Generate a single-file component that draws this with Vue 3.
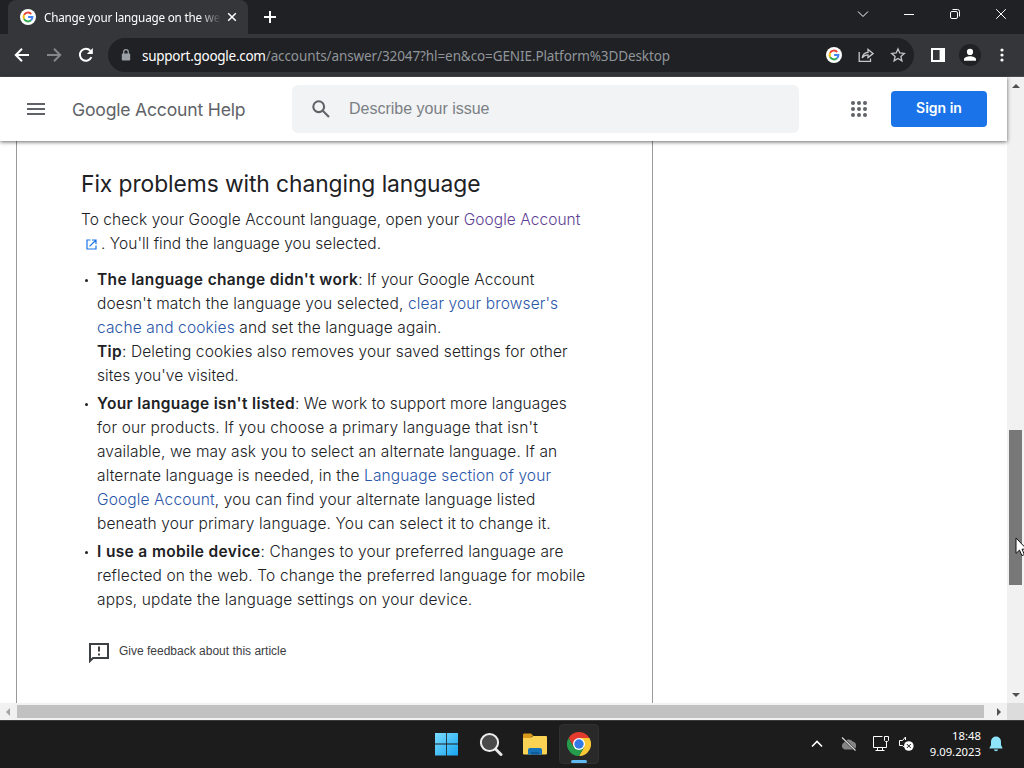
<template>
  <div class="screen">
    <!-- Tab strip -->
    <div class="tab-strip">
      <div class="tab">
        <svg class="favicon" viewBox="0 0 16 16">
          <circle cx="8" cy="8" r="8" fill="#fff" />
          <g fill="none" stroke-width="2">
            <path d="M4.1 5.9A4.4 4.4 0 0 1 11.2 5" stroke="#ea4335" />
            <path d="M4.1 5.9A4.4 4.4 0 0 0 4.1 10.1" stroke="#fbbc05" />
            <path d="M4.1 10.1A4.4 4.4 0 0 0 11 11.2" stroke="#34a853" />
            <path d="M8.1 8H12.4A4.4 4.4 0 0 1 11 11.2" stroke="#4285f4" />
          </g>
        </svg>
        <span class="tab-title">Change your language on the we</span>
        <svg class="tab-close" viewBox="0 0 10 10"><path d="M1.2 1.2L8.8 8.8M8.8 1.2L1.2 8.8" /></svg>
      </div>
      <svg class="new-tab" viewBox="0 0 12 12"><path d="M6 0V12M0 6H12" /></svg>
      <div class="window-buttons">
        <svg viewBox="0 0 12 12"><path d="M1 3.5L6 8.5L11 3.5" /></svg>
        <svg viewBox="0 0 12 12"><path d="M1 6.5H11" /></svg>
        <svg viewBox="0 0 12 12">
          <rect x="1.5" y="3.5" width="7" height="7" rx="1.4" />
          <path d="M3.5 1.5H8.5A2 2 0 0 1 10.5 3.5V8.5" />
        </svg>
        <svg viewBox="0 0 12 12"><path d="M1.2 1.2L10.8 10.8M10.8 1.2L1.2 10.8" /></svg>
      </div>
    </div>

    <!-- Toolbar -->
    <div class="toolbar">
      <svg class="nav-icon" viewBox="0 0 16 16"><path d="M15 8H2M8 1.8L1.8 8L8 14.2" /></svg>
      <svg class="nav-icon dim" viewBox="0 0 16 16"><path d="M1 8H14M8 1.8L14.2 8L8 14.2" /></svg>
      <svg class="nav-icon" viewBox="0 0 16 16">
        <path d="M13.4 10.2A6 6 0 1 1 12.4 3.8" />
        <path d="M14.8 1V6.9H8.9Z" fill="#fff" stroke="none" />
      </svg>
      <div class="omnibox">
        <svg class="lock" viewBox="0 0 10 12">
          <rect x="0.8" y="4.4" width="8.4" height="7.2" rx="1" fill="#9aa0a6" />
          <path d="M2.7 5V3A2.3 2.3 0 0 1 7.3 3V5" fill="none" stroke="#9aa0a6" stroke-width="1.3" />
        </svg>
        <div class="url"><span class="host">support.google.com</span><span class="path">/accounts/answer/32047?hl=en&amp;co=GENIE.Platform%3DDesktop</span></div>
        <svg class="favicon" viewBox="0 0 16 16">
          <circle cx="8" cy="8" r="8" fill="#fff" />
          <g fill="none" stroke-width="2">
            <path d="M4.1 5.9A4.4 4.4 0 0 1 11.2 5" stroke="#ea4335" />
            <path d="M4.1 5.9A4.4 4.4 0 0 0 4.1 10.1" stroke="#fbbc05" />
            <path d="M4.1 10.1A4.4 4.4 0 0 0 11 11.2" stroke="#34a853" />
            <path d="M8.1 8H12.4A4.4 4.4 0 0 1 11 11.2" stroke="#4285f4" />
          </g>
        </svg>
        <svg class="box-icon" viewBox="0 0 16 16">
          <path d="M1.2 5V14.3H12.5V11.5" />
          <path d="M4.2 11C4.6 7.6 6.6 5.6 10 5.3V2.4L15 6.6L10 10.6V7.9C7.4 7.9 5.6 8.9 4.2 11Z" />
        </svg>
        <svg class="box-icon" viewBox="0 0 16 16">
          <path d="M8 1.9L9.8 6L14.3 6.4L10.9 9.4L11.9 13.8L8 11.5L4.1 13.8L5.1 9.4L1.7 6.4L6.2 6Z" />
        </svg>
      </div>
      <svg class="side-panel" viewBox="0 0 14 14">
        <path d="M0 0H14V14H0ZM2 2V12H8.6V2Z" fill="#fff" fill-rule="evenodd" />
      </svg>
      <svg class="profile" viewBox="0 0 22 22">
        <circle cx="11" cy="11" r="11" fill="#202124" />
        <circle cx="11" cy="7.9" r="3.1" fill="#fff" />
        <path d="M5 16.8V15.3C5 13.2 8.5 12.2 11 12.2S17 13.2 17 15.3V16.8Z" fill="#fff" />
      </svg>
      <svg class="menu-dots" viewBox="0 0 4 14">
        <circle cx="2" cy="2" r="1.6" /><circle cx="2" cy="7" r="1.6" /><circle cx="2" cy="12" r="1.6" />
      </svg>
    </div>

    <!-- Page -->
    <div class="viewport">
      <div class="page">
        <header class="help-header">
          <svg class="burger" viewBox="0 0 18 12"><path d="M0 1H18M0 6H18M0 11H18" /></svg>
          <span class="product">Google Account Help</span>
          <div class="search">
            <svg viewBox="0 0 18 18">
              <circle cx="6.7" cy="6.7" r="5.4" />
              <path d="M10.8 10.8L17 17" />
            </svg>
            <span>Describe your issue</span>
          </div>
          <svg class="apps" viewBox="0 0 16 16">
            <template v-for="y in [2, 8, 14]" :key="y">
              <circle v-for="x in [2, 8, 14]" :key="x" :cx="x" :cy="y" r="2" />
            </template>
          </svg>
          <button class="sign-in">Sign in</button>
        </header>

        <main class="article">
          <h2>Fix problems with changing language</h2>
          <div class="intro">
            <div class="line">
              <span :style="{ letterSpacing: intro[0].spacing + 'px' }">To check your Google Account language, open your <a class="visited">Google Account</a></span>
            </div>
            <div class="line">
              <svg class="external" viewBox="0 0 11 11">
                <path d="M4.5 1H1V10H10V6.5M6 1H10V5M10 1L3.6 7.4" />
              </svg>
              <span :style="{ letterSpacing: intro[1].spacing + 'px' }">. You'll find the language you selected.</span>
            </div>
          </div>
          <ul>
            <li v-for="(item, i) in items" :key="i">
              <div v-for="(line, j) in item" :key="j" class="line" :style="{ letterSpacing: line.spacing + 'px' }">
                <component :is="part.tag" v-for="(part, k) in line.parts" :key="k">{{ part.text }}</component>
              </div>
            </li>
          </ul>
          <div class="feedback">
            <svg viewBox="0 0 20 20">
              <path d="M1 18V1H19V15H4Z" />
              <path d="M10 3.5V8.6M10 10.6V12.6" />
            </svg>
            <span>Give feedback about this article</span>
          </div>
        </main>
      </div>

      <div class="v-scroll">
        <svg viewBox="0 0 8 4"><path d="M0 4L4 0L8 4Z" /></svg>
        <div class="v-thumb"></div>
        <svg viewBox="0 0 8 4"><path d="M0 0L4 4L8 0Z" /></svg>
      </div>
    </div>

    <div class="h-scroll">
      <svg class="off" viewBox="0 0 4 8"><path d="M4 0L0 4L4 8Z" /></svg>
      <div class="h-thumb"></div>
      <svg viewBox="0 0 4 8"><path d="M0 0L4 4L0 8Z" /></svg>
      <div class="corner"></div>
    </div>

    <!-- Taskbar -->
    <div class="taskbar">
      <div class="apps-row">
        <div class="task">
          <svg width="24" height="24" viewBox="0 0 24 24">
            <defs>
              <linearGradient id="win" x1="0" y1="0" x2="1" y2="1" gradientUnits="objectBoundingBox">
                <stop offset="0" stop-color="#7bdcff" /><stop offset="1" stop-color="#18a4f0" />
              </linearGradient>
            </defs>
            <path d="M0 1H11.1V11.4H0ZM11.9 1H23V11.4H11.9ZM0 12.4H11.1V23.5H0ZM11.9 12.4H23V23.5H11.9Z" fill="url(#win)" />
          </svg>
        </div>
        <div class="task">
          <svg width="24" height="24" viewBox="0 0 24 24">
            <path d="M16.5 17L22 22.5" stroke="#e6e6e6" stroke-width="3" stroke-linecap="round" />
            <circle cx="10.5" cy="10.5" r="8.6" fill="#4a4a4a" stroke="#eee" stroke-width="2" />
          </svg>
        </div>
        <div class="task">
          <svg width="26" height="24" viewBox="0 0 26 24">
            <path d="M1 3C1 2 1.5 1.5 2.5 1.5H9L11.5 4H10L8 7H1Z" fill="#d99a1c" />
            <path d="M1 6H8.5L11 4H24Q25 4 25 5V21Q25 22.5 24 22.5H2Q1 22.5 1 21.5Z" fill="#fbd354" />
            <path d="M6 22.5V18Q6 16 8 16H18Q20 16 20 18V22.5Z" fill="#1673b8" />
            <path d="M9 22.5V20H17V22.5Z" fill="#0f5c9c" />
          </svg>
        </div>
        <div class="task active">
          <svg width="24" height="24" viewBox="0 0 24 24">
            <path d="M17.2 15L12 24A12 12 0 0 0 22.4 6H12Z" fill="#fcc934" />
            <path d="M12 6H22.4A12 12 0 0 0 1.6 6L6.8 15Z" fill="#e33b2e" />
            <path d="M1.6 6A12 12 0 0 0 12 24L17.2 15H6.8Z" fill="#259b4b" />
            <circle cx="12" cy="12" r="6" fill="#fff" />
            <circle cx="12" cy="12" r="4.7" fill="#3478e5" />
          </svg>
          <i></i>
        </div>
      </div>
      <div class="tray">
        <svg class="chevron" width="12" height="8" viewBox="0 0 12 8"><path d="M1 6.5L6 1.5L11 6.5" /></svg>
        <svg class="cloud" width="18" height="14" viewBox="0 0 18 14">
          <path d="M4.5 12.5A3.7 3.7 0 0 1 4 5.6A5 5 0 0 1 12.7 4.5A4.2 4.2 0 0 1 13.5 12.5Z" fill="#858585" />
          <path d="M2 0.5L15.5 13.5" stroke="#1c1c1c" stroke-width="2.2" />
          <path d="M2 0.5L15.5 13.5" stroke="#ddd" stroke-width="1.1" />
        </svg>
        <svg class="net" width="18" height="17" viewBox="0 0 18 17">
          <path d="M10.5 1.5H1.5V12.5H14.5V8M5.5 12.5V15.5M10.5 12.5V15.5M3.5 15.5H12.5M12.5 1.5H16.5V5.5L15.5 6.5H13.5L12.5 5.5ZM14.5 6.5V9" />
        </svg>
        <svg class="sound" width="16" height="15" viewBox="0 0 16 15">
          <path d="M6.5 4V1L3.5 4.5H.5V9.5H3.5L4.8 11" fill="none" stroke="#fff" />
          <circle cx="9.8" cy="10" r="4.8" fill="#fff" />
          <path d="M7.8 8L11.8 12M11.8 8L7.8 12" stroke="#1c1c1c" />
        </svg>
        <div class="clock">
          <span>18:48</span>
          <span class="date">9.09.2023</span>
        </div>
        <svg class="bell" width="14" height="16" viewBox="0 0 14 16">
          <path d="M7 .5A5 5 0 0 0 2 5.5V9L.5 12V12.6H13.5V12L12 9V5.5A5 5 0 0 0 7 .5ZM4.8 13.6A2.3 2.3 0 0 0 9.2 13.6Z" fill="#8fe3fa" />
        </svg>
      </div>
    </div>

    <svg class="cursor" viewBox="0 0 13 20">
      <path d="M1 1V16.4L4.5 13.1L6.9 18.6L9.4 17.5L7 12.2H11.8Z" fill="#fff" stroke="#111" />
    </svg>
  </div>
</template>

<script setup>
const t = (text) => ({ tag: 'span', text })
const b = (text) => ({ tag: 'b', text })
const a = (text) => ({ tag: 'a', text })
const line = (spacing, ...parts) => ({ spacing, parts })

const intro = [{ spacing: 0.057 }, { spacing: 0.04 }]

const items = [
  [
    line(0.05, b("The language change didn't work"), t(': If your Google Account')),
    line(0.13, t("doesn't match the language you selected, "), a("clear your browser's")),
    line(0.13, a('cache and cookies'), t(' and set the language again.')),
    line(0.12, b('Tip'), t(': Deleting cookies also removes your saved settings for other')),
    line(0.02, t("sites you've visited."))
  ],
  [
    line(0.06, b("Your language isn't listed"), t(': We work to support more languages')),
    line(0.16, t("for our products. If you choose a primary language that isn't")),
    line(0.11, t('available, we may ask you to select an alternate language. If an')),
    line(0.145, t('alternate language is needed, in the '), a('Language section of your')),
    line(0.13, a('Google Account'), t(', you can find your alternate language listed')),
    line(0.13, t('beneath your primary language. You can select it to change it.'))
  ],
  [
    line(0.15, b('I use a mobile device'), t(': Changes to your preferred language are')),
    line(0.14, t('reflected on the web. To change the preferred language for mobile')),
    line(0.15, t('apps, update the language settings on your device.'))
  ]
]
</script>

<style>
body {
  margin: 0;
  overflow: hidden;
}
</style>

<style scoped>
.screen {
  position: relative;
  width: 1024px;
  height: 768px;
  display: flex;
  flex-direction: column;
  overflow: hidden;
  background: #fff;
  font-family: Inter, 'Liberation Sans', sans-serif;
}

svg {
  display: block;
  flex: none;
}

/* Tab strip */
.tab-strip {
  height: 34px;
  flex: none;
  display: flex;
  align-items: center;
  background: #202124;
  padding-left: 8px;
}

.tab {
  box-sizing: border-box;
  width: 240px;
  height: 34px;
  padding: 0 11px 0 12px;
  display: flex;
  align-items: center;
  background: #35363a;
  border-radius: 8px 8px 0 0;
}

.favicon {
  width: 16px;
  height: 16px;
}

.tab-title {
  width: 176px;
  margin-left: 8px;
  white-space: nowrap;
  font: 11.7px 'Noto Sans', sans-serif;
  letter-spacing: -0.2px;
  color: #fff;
  mask-image: linear-gradient(to right, #000 155px, transparent 177px);
}

.tab-close {
  width: 10px;
  height: 10px;
  margin-left: 7px;
  fill: none;
  stroke: #fff;
  stroke-width: 1.5;
}

.new-tab {
  width: 12px;
  height: 12px;
  margin-left: 16px;
  stroke: #fff;
  stroke-width: 2;
}

.window-buttons {
  display: flex;
  gap: 34px;
  margin: -6px 17px 0 auto;
}

.window-buttons svg {
  width: 12px;
  height: 12px;
  fill: none;
  stroke: #fff;
}

/* Toolbar */
.toolbar {
  height: 43px;
  flex: none;
  box-sizing: border-box;
  display: flex;
  align-items: center;
  padding-left: 14px;
  background: #35363a;
  border-bottom: 1px solid #4a4b4e;
}

.nav-icon {
  width: 16px;
  height: 16px;
  margin-right: 16px;
  fill: none;
  stroke: #fff;
  stroke-width: 2;
}

.nav-icon.dim {
  stroke: #85868a;
}

.omnibox {
  box-sizing: border-box;
  width: 806px;
  height: 34px;
  margin-left: -2px;
  padding: 0 8px 0 13px;
  display: flex;
  align-items: center;
  border-radius: 17px;
  background: #202124;
}

.lock {
  width: 10px;
  height: 12px;
}

.url {
  flex: 1;
  margin: 1px 0 0 11px;
  white-space: nowrap;
  font: 13.5px 'Noto Sans', sans-serif;
  color: #90959a;
}

.host {
  color: #fff;
  letter-spacing: -0.27px;
}

.path {
  letter-spacing: -0.1px;
}

.box-icon {
  width: 16px;
  height: 16px;
  margin-left: 16px;
  fill: none;
  stroke: #c5c7ca;
  stroke-width: 1.3;
}

.side-panel {
  width: 14px;
  height: 14px;
  margin-left: 17px;
}

.profile {
  width: 22px;
  height: 22px;
  margin-left: 14px;
}

.menu-dots {
  width: 4px;
  height: 14px;
  margin-left: 19px;
  fill: #fff;
}

/* Page */
.viewport {
  height: 626px;
  flex: none;
  display: flex;
}

.page {
  width: 1007px;
  display: flex;
  flex-direction: column;
}

.help-header {
  position: relative;
  box-sizing: border-box;
  height: 64px;
  flex: none;
  padding-left: 27px;
  display: flex;
  align-items: center;
  background: #fff;
  box-shadow: 0 1px 4px rgba(0, 0, 0, 0.6);
}

.burger {
  width: 18px;
  height: 12px;
  stroke: #5f6368;
  stroke-width: 2;
}

.product {
  width: 220px;
  margin-left: 27px;
  white-space: nowrap;
  font-size: 17.6px;
  letter-spacing: -0.2px;
  color: #5f6368;
}

.search {
  box-sizing: border-box;
  width: 507px;
  height: 48px;
  padding-left: 20px;
  display: flex;
  align-items: center;
  gap: 19px;
  border-radius: 6px;
  background: #f1f3f4;
  font: 16px 'Liberation Sans', sans-serif;
  color: #7b7f84;
}

.search svg {
  width: 18px;
  height: 18px;
  fill: none;
  stroke: #5f6368;
  stroke-width: 2.1;
}

.apps {
  width: 16px;
  height: 16px;
  margin-left: 52px;
  fill: #5f6368;
}

.sign-in {
  width: 96px;
  height: 36px;
  margin-left: 24px;
  padding: 0 0 3px;
  border: 0;
  border-radius: 4px;
  background: #1a73e8;
  color: #fff;
  font: 600 14px Inter, sans-serif;
}

.article {
  box-sizing: border-box;
  width: 637px;
  height: 562px;
  margin-left: 16px;
  padding: 27px 0 0 64px;
  border: solid #9a9a9a;
  border-width: 0 1px;
  color: #202124;
}

h2 {
  margin: 0;
  font-size: 22.8px;
  font-weight: 400;
  line-height: 32px;
  letter-spacing: -0.07px;
}

.intro {
  margin-top: 8px;
}

.line {
  display: flex;
  align-items: center;
  height: 24px;
  line-height: 24px;
  font-size: 15.5px;
  font-weight: 300;
  white-space: pre;
}

b {
  font-weight: 600;
  letter-spacing: 0.35px;
}

a {
  color: #2a56a8;
}

a.visited {
  color: #5e4293;
}

.external {
  width: 11px;
  height: 11px;
  margin: 1px 4px 0 5px;
  fill: none;
  stroke: #1a73e8;
  stroke-width: 1.2;
}

ul {
  margin: 12px 0 0;
  padding: 0;
  list-style: none;
}

li {
  padding-left: 16px;
  margin-bottom: 4px;
}

li::before {
  content: '';
  float: left;
  width: 3px;
  height: 3px;
  margin: 11px 0 0 -12px;
  border-radius: 50%;
  background: #202124;
}

.feedback {
  display: flex;
  align-items: center;
  gap: 10px;
  margin: 31px 0 0 8px;
  font: 12px 'Liberation Sans', sans-serif;
  color: #3c4043;
}

.feedback svg {
  width: 20px;
  height: 20px;
  fill: none;
  stroke: #3c4043;
  stroke-width: 2;
}

.feedback span {
  margin-bottom: 5px;
}

/* Scrollbars */
.v-scroll {
  box-sizing: border-box;
  width: 17px;
  padding: 7px 0 6px;
  display: flex;
  flex-direction: column;
  align-items: center;
  background: #f1f1f1;
}

.v-scroll svg {
  width: 8px;
  height: 4px;
  fill: #505050;
}

.v-thumb {
  width: 13px;
  height: 155px;
  margin: 342px 0 auto;
  background: #787878;
}

.h-scroll {
  height: 17px;
  flex: none;
  display: flex;
  align-items: center;
  background: #f1f1f1;
}

.h-scroll svg {
  width: 4px;
  height: 8px;
  margin-left: 13px;
  fill: #505050;
}

.h-scroll svg.off {
  margin: 0 7px 0 6px;
  fill: #a3a3a3;
}

.h-thumb {
  width: 967px;
  height: 13px;
  background: #c1c1c1;
}

.corner {
  width: 17px;
  height: 17px;
  margin-left: auto;
  background: #dcdcdc;
}

/* Taskbar */
.taskbar {
  box-sizing: border-box;
  height: 48px;
  flex: none;
  display: flex;
  align-items: center;
  justify-content: space-between;
  padding: 0 21px 2px 427px;
  background: #1c1c1c;
  border-top: 1px solid #3a3a3a;
}

.apps-row {
  display: flex;
  gap: 4px;
}

.task {
  position: relative;
  box-sizing: border-box;
  width: 40px;
  height: 40px;
  display: flex;
  align-items: center;
  justify-content: center;
  border-radius: 4px;
}

.task.active {
  background: #292929;
  border: 1px solid #303030;
}

.task i {
  position: absolute;
  bottom: 0;
  left: 11px;
  width: 16px;
  height: 3px;
  border-radius: 2px;
  background: #60b8f0;
}

.tray {
  display: flex;
  align-items: center;
}

.chevron {
  fill: none;
  stroke: #fff;
  stroke-width: 1.6;
}

.cloud {
  margin-left: 17px;
}

.net {
  margin-left: 14px;
  fill: none;
  stroke: #fff;
}

.sound {
  margin-left: 9px;
}

.clock {
  display: flex;
  flex-direction: column;
  align-items: flex-end;
  width: 66px;
  font: 11.3px/16px 'Noto Sans', sans-serif;
  color: #fff;
}

.bell {
  margin: 0 0 0 8px;
}

.cursor {
  position: absolute;
  left: 1015px;
  top: 537px;
  width: 13px;
  height: 20px;
}
</style>
